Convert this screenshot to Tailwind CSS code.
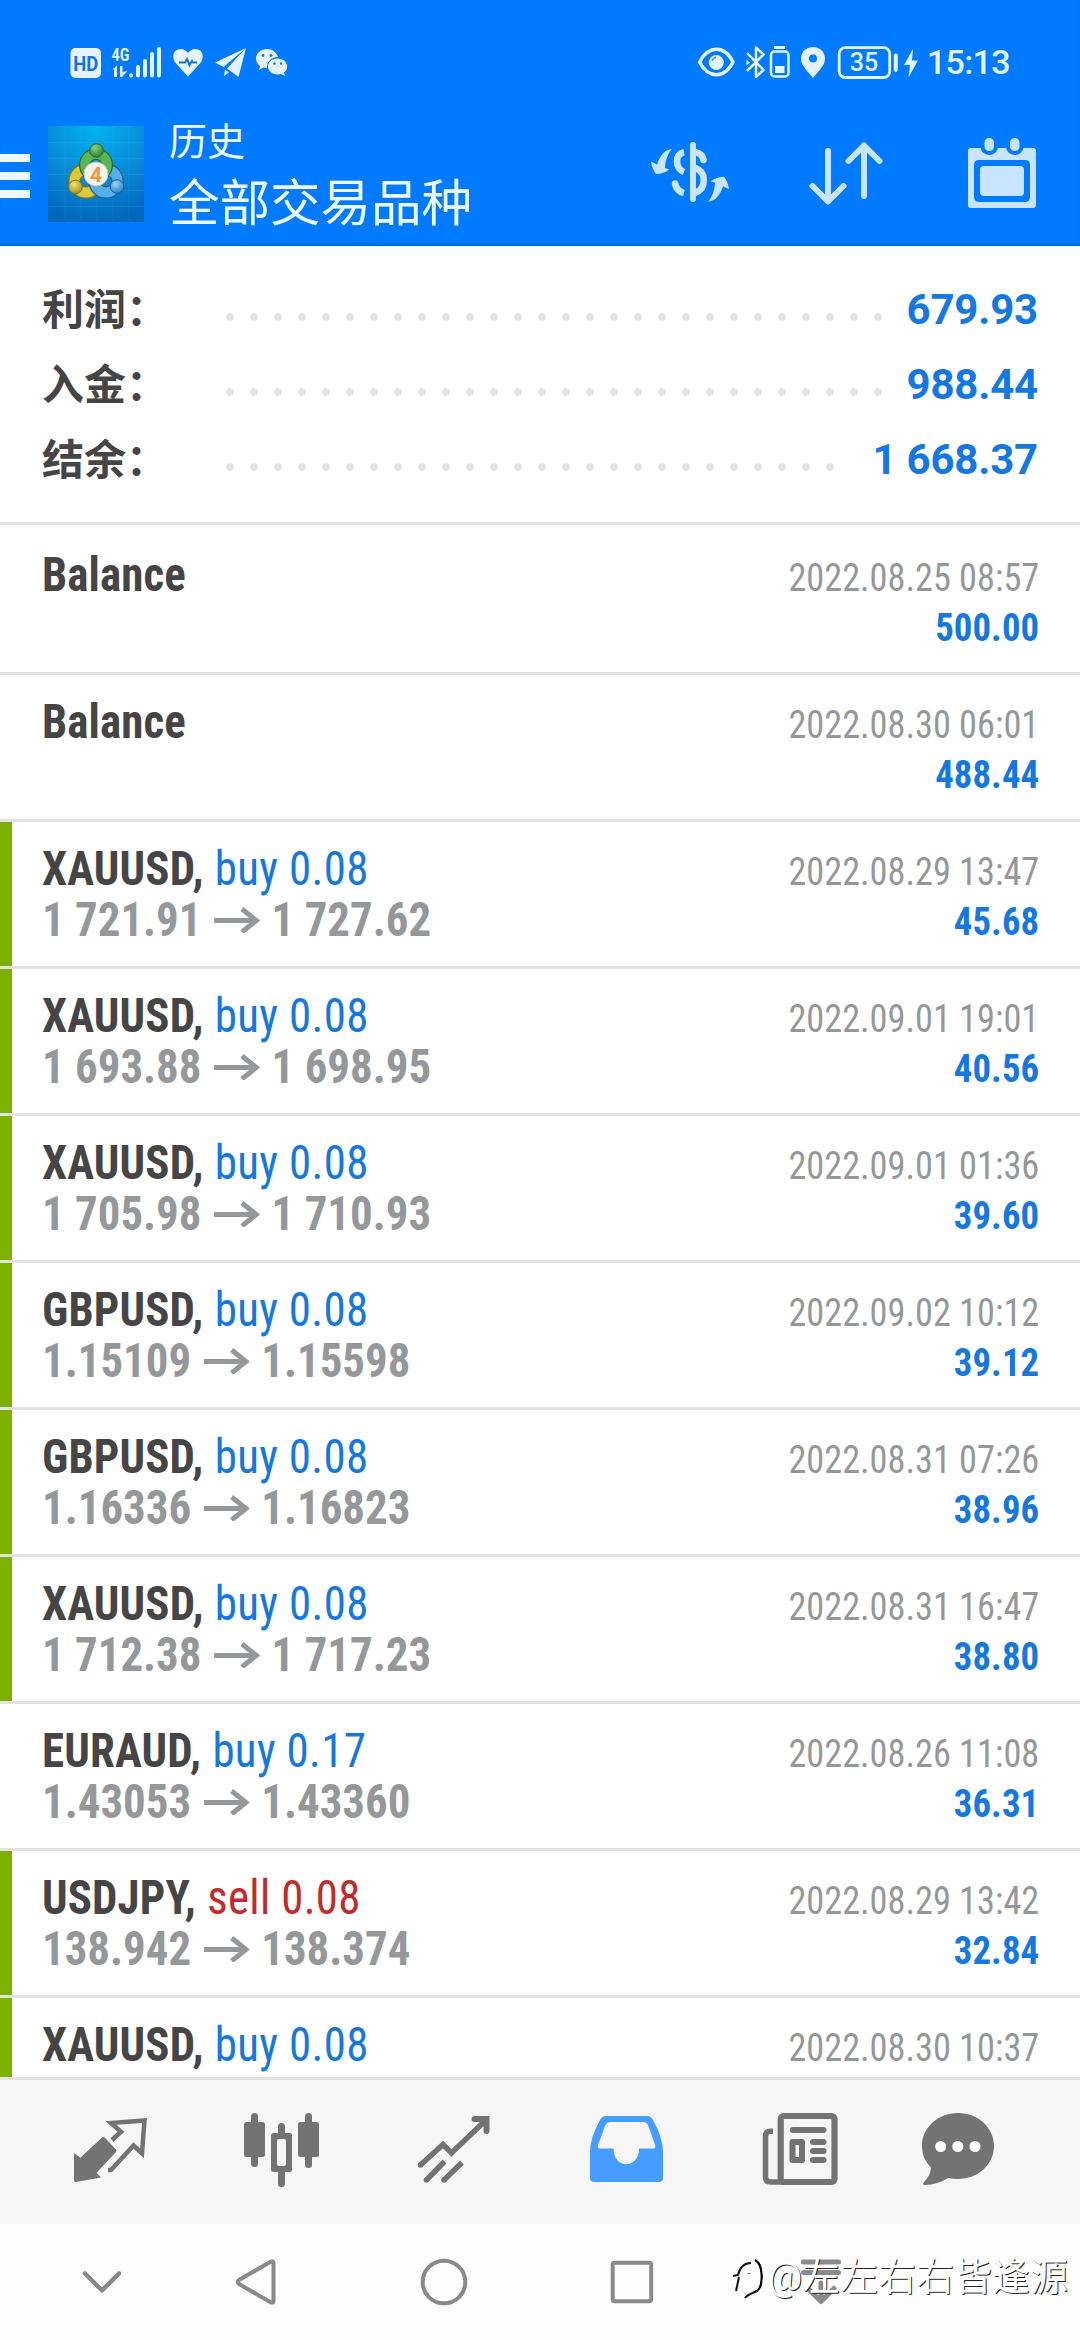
<!DOCTYPE html>
<html lang="zh-CN">
<head>
<meta charset="utf-8">
<title>历史</title>
<script src="https://cdn.jsdelivr.net/npm/@tailwindcss/browser@4"></script>
</head>
<body class="flex h-[2340px] w-[1080px] flex-col overflow-hidden bg-white font-['Roboto','Noto_Sans_CJK_SC',sans-serif]">

<header class="flex h-[246px] shrink-0 flex-col bg-[#007aff] shadow-[inset_0_-3px_2px_-1px_#006be0]">
  <!-- status bar -->
  <div class="flex h-[124px] items-center justify-between pr-[70px] pl-[70px] text-[#e4f3ff]">
    <svg class="h-[34px] w-[220px]" viewBox="70 44 220 34" fill="currentColor">
      <rect x="70.500" y="47" width="30.500" height="30" rx="5"/>
      <text x="85.800" y="69.500" text-anchor="middle" font-family="Roboto" font-weight="700" font-size="20" textLength="25" lengthAdjust="spacingAndGlyphs" fill="#1273e0">HD</text>
      <text x="111.500" y="59.500" font-family="Roboto Condensed" font-weight="600" font-size="19" textLength="18" lengthAdjust="spacingAndGlyphs">4G</text>
      <path d="M112 69l5-4.500v11.500h-3v-8zM120 65h2.500v6l5-1-5.500 6h-2z"/>
      <g stroke="currentColor" stroke-width="4" stroke-linecap="round"><path d="M131 74.500v0M138 66v8.500M145 60v14.500M152 53v21.500M159 48v26.500"/></g>
      <path d="M188 75.500l-12-13c-5-6-3-14.500 4.500-14.500 3.500 0 6 2 7.500 4 1.500-2 4-4 7.500-4 7.500 0 9.500 8.500 4.500 14.500z"/>
      <path d="M179 61.500h6l2-3.500 2.500 6 2.500-4 1 1.500h4" fill="none" stroke="#1273e0" stroke-width="2"/>
      <path d="M246 47L215 61.500l8.500 4.500zM246 47l-19 20.500 11.500 8.500zM225 68.500l-1 6.500 5-3.500z"/>
      <path d="M267 48c-6 0-11 4-11 9.500 0 3 1.500 5.500 4 7.500l-1 4 4.500-2.500c1.200.3 2.500.500 3.500.500-.500-6 4-11 11-11C276.500 51.500 272.500 48 267 48z"/>
      <path d="M277.500 57.500c-5.500 0-9.500 3.600-9.500 8s4 8 9.500 8c1.200 0 2.400-.2 3.500-.500l4 2-1-3.500c2-1.500 3.200-3.600 3.200-6 0-4.400-4.200-8-9.700-8z"/>
      <g fill="#1273e0"><circle cx="263" cy="54.500" r="1.400"/><circle cx="271" cy="54.500" r="1.400"/><circle cx="274.500" cy="62.500" r="1.200"/><circle cx="281" cy="62.500" r="1.200"/></g>
    </svg>
    <div class="flex items-center gap-[8px]">
      <svg class="h-[34px] w-[222px]" viewBox="696 44 222 34" fill="none" stroke="currentColor">
        <path d="M698.500 61c9-17 25-17 33.500 0-8.500 17-24.500 17-33.500 0z" stroke-width="3.500" stroke-linejoin="round"/>
        <circle cx="715.300" cy="61.500" r="7.500" fill="currentColor" stroke="none"/><path d="M711 60q1-3 4-4" stroke="#3c93f5" stroke-width="1.500"/>
        <path d="M746 52l16.500 17-7.500 7V46.500l7.500 7L746 70" stroke-width="2.500" stroke-linejoin="round"/><path d="M745.500 58.500l3.500 3-3.500 3z" fill="currentColor" stroke="none"/>
        <rect x="770" y="50.500" width="17.500" height="25" rx="3.500" stroke-width="2.500"/><path d="M773 46.500h11" stroke-width="3"/><rect x="774" y="65" width="9.500" height="7" fill="currentColor" stroke="none"/>
        <path d="M812 46c-7 0-12 5-12 11.500 0 7 6 12 12 19.500 6-7.500 12-12.500 12-19.500C824 51 819 46 812 46zm0 7.500a4 4 0 1 1 0 8 4 4 0 0 1 0-8z" fill="currentColor" fill-rule="evenodd" stroke="none"/>
        <rect x="838.200" y="46.700" width="50.500" height="29.800" rx="6" stroke-width="2.800"/>
        <path d="M894.800 54.500v14.500" stroke-width="4" stroke-linecap="round"/>
        <text x="863" y="70" text-anchor="middle" font-family="Roboto" font-weight="500" font-size="25" fill="currentColor" stroke="none">35</text>
        <path d="M912 48l-9 16h6l-1.500 12.500 9.500-17h-6z" fill="currentColor" stroke="none"/>
      </svg>
      <span class="text-[34px] leading-[34px] font-medium tracking-[-0.600px]">15:13</span>
    </div>
  </div>
  <!-- title bar -->
  <div class="flex h-[122px] items-start text-[#ecfaff]">
    <div class="mt-[30px] flex w-[30px] flex-col gap-[10px]">
      <div class="h-2 bg-current"></div><div class="h-2 bg-current"></div><div class="h-2 bg-current"></div>
    </div>
    <svg class="mt-[2px] ml-[18px] size-24" viewBox="0 0 96 96">
      <defs>
        <radialGradient id="bg" cx=".5" cy="0" r="1"><stop offset="0" stop-color="#00b4ee"/><stop offset=".55" stop-color="#0a8bd8"/><stop offset="1" stop-color="#0067bd"/></radialGradient>
        <radialGradient id="gr" cx=".4" cy=".3" r=".8"><stop offset="0" stop-color="#8fd07a"/><stop offset="1" stop-color="#1d7a35"/></radialGradient>
        <radialGradient id="ye" cx=".4" cy=".3" r=".8"><stop offset="0" stop-color="#f4e36a"/><stop offset="1" stop-color="#a08a10"/></radialGradient>
        <radialGradient id="bl" cx=".4" cy=".3" r=".8"><stop offset="0" stop-color="#9ad4fa"/><stop offset="1" stop-color="#1f78c2"/></radialGradient>
      </defs>
      <rect width="96" height="96" fill="url(#bg)"/>
      <path d="M0 16.500h96M0 32.500h96M0 48.500h96M0 64.500h96M0 80.500h96M17 0v96M33 0v96M49 0v96M65 0v96M81 0v96" stroke="#6fd0ff" stroke-opacity=".12"/>
      <circle cx="38" cy="55" r="11.500" fill="none" stroke="#7f7414" stroke-width="12.500"/>
      <circle cx="38" cy="55" r="11.500" fill="none" stroke="#dcc93a" stroke-width="10"/>
      <circle cx="58" cy="55" r="11.500" fill="none" stroke="#165c99" stroke-width="12.500"/>
      <circle cx="58" cy="55" r="11.500" fill="none" stroke="#58aee8" stroke-width="10"/>
      <circle cx="48" cy="39" r="11" fill="none" stroke="#1f6b2c" stroke-width="12"/>
      <circle cx="48" cy="39" r="11" fill="none" stroke="#5cb457" stroke-width="9.500"/>
      <circle cx="48.500" cy="24.500" r="6.800" fill="url(#gr)" stroke="#1f6b2c"/>
      <circle cx="27.500" cy="61" r="6.800" fill="url(#ye)" stroke="#7f7414"/>
      <circle cx="69" cy="60.500" r="6.800" fill="url(#bl)" stroke="#165c99"/>
      <circle cx="48" cy="48" r="12" fill="#f6f3ee" stroke="#c9c4b8"/>
      <text x="48" y="55.500" text-anchor="middle" font-family="Roboto" font-weight="700" font-size="21" fill="#f0953a">4</text>
    </svg>
    <div class="ml-[25px] flex flex-col">
      <div class="-mt-[4px] text-[38px] leading-[44px]">历史</div>
      <div class="mt-[9px] text-[50.500px] leading-[62px]">全部交易品种</div>
    </div>
    <svg class="mt-[13px] ml-auto h-[72px] w-[80px] text-[#c8e4ff]" viewBox="650 137 80 72" fill="none" stroke="currentColor">
      <path d="M693 145v54" stroke-width="6" stroke-linecap="round"/>
      <path d="M684 152.200c-5 1-7 5-7 9.300 0 5 2.500 8.500 7 10.500M675 183.500c1 5 4.500 8.500 9 9.500" stroke-width="6.600"/><circle cx="675" cy="183.500" r="3.200" fill="currentColor" stroke="none"/>
      <path d="M695 152c5 1 8 4 8.500 8.500M695 168c6 2 8.800 6 8.800 12 0 7-3 11-8.800 12.800" stroke-width="6.600"/><circle cx="703.500" cy="160" r="3.200" fill="currentColor" stroke="none"/>
      <g fill="currentColor" stroke="none"><path id="sw" d="M671.700 149C665 150 660 155 657 164.500L651 161.500Q652 169 656 174 663 174 669.500 169.500L665 168C665 161 668 154 671.700 149z"/><use href="#sw" transform="rotate(180 690 175.400)"/></g>
    </svg>
    <svg class="mt-[13px] ml-[76px] h-[72px] w-[80px] text-[#c8e4ff]" viewBox="806 137 80 72" fill="none" stroke="currentColor" stroke-width="6" stroke-linecap="round" stroke-linejoin="round">
      <path d="M828 151v50M812.500 186l15.500 15.500 15.500-15.500M864 196V145.500M848.500 161l15.500-15.500 15.500 15.500"/>
    </svg>
    <svg class="mt-[13px] mr-[40px] ml-[78px] h-[76px] w-[76px] text-[#c8e4ff]" viewBox="964 137 76 76" fill="currentColor">
      <path fill-rule="evenodd" d="M971 148h62q3 0 3 3v54q0 3-3 3h-62q-3 0-3-3v-54q0-3 3-3zM979 160q-5 0-5 5v32q0 5 5 5h46q5 0 5-5v-32q0-5-5-5z"/>
      <rect x="980" y="166" width="44" height="30" rx="4"/>
      <g stroke="#007aff" stroke-width="4"><rect x="982.500" y="136" width="13.500" height="17" rx="6.500"/><rect x="1008" y="136" width="13.500" height="17" rx="6.500"/></g>
    </svg>
  </div>
</header>

<!-- summary -->
<section class="flex shrink-0 flex-col pt-[26px] pb-[25px]">
  <div class="flex h-[75px] items-center pr-[42px] pl-[42px]">
    <span class="w-[176px] pt-[2px] text-[42px] leading-[69px] font-bold text-[#454545]">利润：</span>
    <span class="mt-[15px] h-[8px] w-[672px] bg-[radial-gradient(circle_at_center,#e3e3e3_3.500px,transparent_4px)] bg-[length:24px_8px]"></span>
    <span class="ml-auto text-[42px] leading-[75px] font-bold tracking-[-0.200px] text-[#1478e4]">679.93</span>
  </div>
  <div class="flex h-[75px] items-center pr-[42px] pl-[42px]">
    <span class="w-[176px] pt-[2px] text-[42px] leading-[69px] font-bold text-[#454545]">入金：</span>
    <span class="mt-[15px] h-[8px] w-[672px] bg-[radial-gradient(circle_at_center,#e3e3e3_3.500px,transparent_4px)] bg-[length:24px_8px]"></span>
    <span class="ml-auto text-[42px] leading-[75px] font-bold tracking-[-0.200px] text-[#1478e4]">988.44</span>
  </div>
  <div class="flex h-[75px] items-center pr-[42px] pl-[42px]">
    <span class="w-[176px] pt-[2px] text-[42px] leading-[69px] font-bold text-[#454545]">结余：</span>
    <span class="mt-[15px] h-[8px] w-[624px] bg-[radial-gradient(circle_at_center,#e3e3e3_3.500px,transparent_4px)] bg-[length:24px_8px]"></span>
    <span class="ml-auto text-[42px] leading-[75px] font-bold tracking-[-0.200px] text-[#1478e4]">1 668.37</span>
  </div>
</section>

<!-- history list -->
<main id="list" class="flex h-[1555px] shrink-0 flex-col overflow-hidden font-['Roboto_Condensed',sans-serif]"></main>

<!-- tabs -->
<nav class="flex h-[147px] shrink-0 border-t-[3px] border-[#e3e3e3] bg-[#f6f6f6] pt-[28px] pl-[70px] text-[#737373]">
  <svg class="h-[80px] w-[80px]" viewBox="70 2108 80 80" fill="currentColor">
    <path d="M74 2153l6.300 4.700 21.500-20q1.500-1.200 3 0l11 11.500q1.500 1.500 0 3l-19.300 20.500 4.500 4.800-25 4.500q-2 0-2-2z"/>
    <path d="M112 2140l9-8.300-10-8.700 33.500-2.500-2.500 33-8.500-8-22.500 24.500h-3" fill="none" stroke="currentColor" stroke-width="4.500"/>
  </svg>
  <svg class="ml-[91px] h-[80px] w-[80px]" viewBox="241 2108 80 80" fill="currentColor">
    <rect x="244" y="2122" width="21" height="35" rx="2.500"/><rect x="251" y="2113" width="7" height="54" rx="3.500"/>
    <rect x="298" y="2122" width="21" height="35" rx="2.500"/><rect x="305" y="2113" width="7" height="55" rx="3.500"/>
    <rect x="278" y="2123" width="7" height="64" rx="3.500"/><rect x="271" y="2133" width="21" height="39" rx="2.500"/>
    <rect x="277" y="2139" width="9" height="27" rx="2" fill="#f6f6f6"/>
  </svg>
  <svg class="ml-[92px] h-[80px] w-[80px]" viewBox="413 2108 80 80" fill="none" stroke="currentColor" stroke-width="5.500">
    <path d="M420.500 2165l22.500-20.500 8.500 8.500 35-33.500"/><path d="M474.500 2119h12v12" stroke-width="6" stroke-linecap="round"/><path d="M444.500 2161.500l-18 18.500M462 2162.500l-18 17.500"/>
    <g fill="currentColor" stroke="none"><circle cx="420.500" cy="2165" r="2.800"/><circle cx="426.500" cy="2180" r="2.800"/><circle cx="444" cy="2180" r="2.800"/></g>
  </svg>
  <svg class="ml-[93px] h-[80px] w-[80px] text-[#469cff]" viewBox="586 2108 80 80" fill="currentColor" fill-rule="evenodd">
    <path d="M606 2116h41q4 0 6 4 10 18 10 32v26q0 4-4 4h-65q-4 0-4-4v-26q0-14 10-32 2-4 6-4zM610 2122q-3 0-4.500 3l-7.500 20q-.800 3.500 2 3.500h13.500c0 21 25.500 21 25.500 0h14q3 0 2.200-3.500l-7.200-20q-1.500-3-4.500-3z"/>
  </svg>
  <svg class="ml-[94px] h-[80px] w-[80px]" viewBox="760 2108 80 80" fill="none" stroke="currentColor">
    <rect x="780.700" y="2116" width="53.800" height="66" rx="3" stroke-width="6.200"/>
    <path d="M773 2131.300h-2.500q-5 0-5 5v40.700q0 5 5 5h13" stroke-width="5.600"/>
    <path d="M793 2130h30.500M813 2142h10.500M813 2151h10.500M813 2160h10.500" stroke-width="6" stroke-linecap="round"/>
    <rect x="792.500" y="2142" width="9.500" height="18" stroke-width="6" stroke-linejoin="round"/>
  </svg>
  <svg class="ml-[78px] h-[80px] w-[80px]" viewBox="918 2108 80 80" fill="currentColor">
    <path d="M958 2113c20 0 36 14.500 36 33s-16 33-36 33q-6 0-10-1-10 6.500-23 7-3-.500-1.500-2.500 7-6.500 7.500-15c-6-6-9-13-9-21.500 0-18.500 16-33 36-33z"/>
    <g fill="#fff"><circle cx="940.700" cy="2146.500" r="5.500"/><circle cx="957.800" cy="2146.500" r="5.500"/><circle cx="975" cy="2146.500" r="5.500"/></g>
  </svg>
</nav>

<!-- system navigation -->
<div class="relative flex h-[116px] shrink-0 items-center bg-[#fdfdfd] pl-[77px] text-[#8a8a8a]">
  <svg class="h-[50px] w-[50px]" viewBox="77 2257 50 50" fill="none" stroke="currentColor" stroke-width="4.500" stroke-linecap="round" stroke-linejoin="round"><path d="M85 2273.500l17 17 17-17"/></svg>
  <svg class="ml-[104px] h-[50px] w-[50px]" viewBox="231 2257 50 50" fill="none" stroke="currentColor" stroke-width="4" stroke-linejoin="round"><path d="M239 2280q-2.500 2 0 4l32 18.500q2.500 1 2.500-2v-37q0-3-2.500-2z"/></svg>
  <svg class="ml-[138px] h-[50px] w-[50px]" viewBox="419 2257 50 50" fill="none" stroke="currentColor" stroke-width="4"><circle cx="444" cy="2282" r="21.300"/></svg>
  <svg class="ml-[138px] h-[50px] w-[50px]" viewBox="607 2257 50 50" fill="none" stroke="currentColor" stroke-width="4"><rect x="612.700" y="2262.800" width="38.500" height="38.500" rx="2"/></svg>
  <svg class="ml-[139px] h-[50px] w-[50px]" viewBox="796 2257 50 50" fill="none" stroke="currentColor" stroke-width="5" stroke-linecap="round" stroke-linejoin="round"><path d="M803.500 2262h35M803.500 2272.500h35M821 2283v18M808 2288.500l13 13 13-13"/></svg>
  <div class="absolute top-[32px] left-[731px] flex items-start">
    <svg class="h-[46px] w-[36px]" viewBox="0 0 36 46" fill="none" stroke="#111" stroke-width="2"><path d="M5 35l3-14M2 20l5-1c2-8 6-12 13-12M24 4c8 4 9 26 2 31-4 2-9 3-12 7"/><path d="M27 6c5 6 5 24-1 29" stroke="#000" stroke-width="1.500"/><path d="M16 17.500h4" stroke="#999" stroke-width="1"/></svg>
    <span class="-mt-[2px] ml-[1px] text-[38px] leading-[46px] whitespace-nowrap text-white [text-shadow:1px_1px_0_#222]">@左左右右皆逢源</span>
  </div>
</div>

<script>
const rows = [
  ['Balance', '', '', '', '', '2022.08.25 08:57', '500.00', 0],
  ['Balance', '', '', '', '', '2022.08.30 06:01', '488.44', 0],
  ['XAUUSD', 'buy', '0.08', '1 721.91', '1 727.62', '2022.08.29 13:47', '45.68', 1],
  ['XAUUSD', 'buy', '0.08', '1 693.88', '1 698.95', '2022.09.01 19:01', '40.56', 1],
  ['XAUUSD', 'buy', '0.08', '1 705.98', '1 710.93', '2022.09.01 01:36', '39.60', 1],
  ['GBPUSD', 'buy', '0.08', '1.15109', '1.15598', '2022.09.02 10:12', '39.12', 1],
  ['GBPUSD', 'buy', '0.08', '1.16336', '1.16823', '2022.08.31 07:26', '38.96', 1],
  ['XAUUSD', 'buy', '0.08', '1 712.38', '1 717.23', '2022.08.31 16:47', '38.80', 1],
  ['EURAUD', 'buy', '0.17', '1.43053', '1.43360', '2022.08.26 11:08', '36.31', 0],
  ['USDJPY', 'sell', '0.08', '138.942', '138.374', '2022.08.29 13:42', '32.84', 1],
  ['XAUUSD', 'buy', '0.08', '', '', '2022.08.30 10:37', '', 1],
];
const arrow = '<svg class="mr-[13px] ml-[13px] h-[26px] w-[49px]" viewBox="0 0 46 26" preserveAspectRatio="none" fill="none" stroke="currentColor" stroke-width="5"><path d="M0 13.500h43M28 2l14.500 11.500L28 25"/></svg>';
document.getElementById('list').innerHTML = rows.map(([sym, side, vol, from, to, date, value, bar], i) => `
  <div class="flex shrink-0 border-t-[3px] border-[#e3e3e3] ${i ? 'h-[147px]' : 'h-[150px] pt-[3px]'}">
    <div class="w-3 shrink-0 ${bar ? 'bg-[#7fb000]' : ''}"></div>
    <div class="flex flex-1 justify-between pr-[42px] pl-[30px]">
      <div class="origin-left scale-x-[0.935] pt-[21px] text-[48px] leading-[51px]">
        <div class="flex gap-[12px]"><b class="font-bold tracking-[0.150px] text-[#454545]">${sym}${side ? ',' : ''}</b><span class="tracking-[0.350px] ${side === 'sell' ? 'text-[#c42a2a]' : 'text-[#1478e0]'}">${side} ${vol}</span></div>
        ${from ? `<div class="flex items-center font-bold text-[#95989a]"><span>${from}</span>${arrow}<span>${to}</span></div>` : ''}
      </div>
      <div class="-mr-px origin-right scale-x-[0.942] pt-[24px] text-right text-[38.500px] leading-[51px]">
        <div class="text-[#95989a]">${date}</div>
        <div class="text-[39px] font-bold tracking-[0.100px] text-[#1478e0]">${value}</div>
      </div>
    </div>
  </div>`).join('');
</script>
</body>
</html>
